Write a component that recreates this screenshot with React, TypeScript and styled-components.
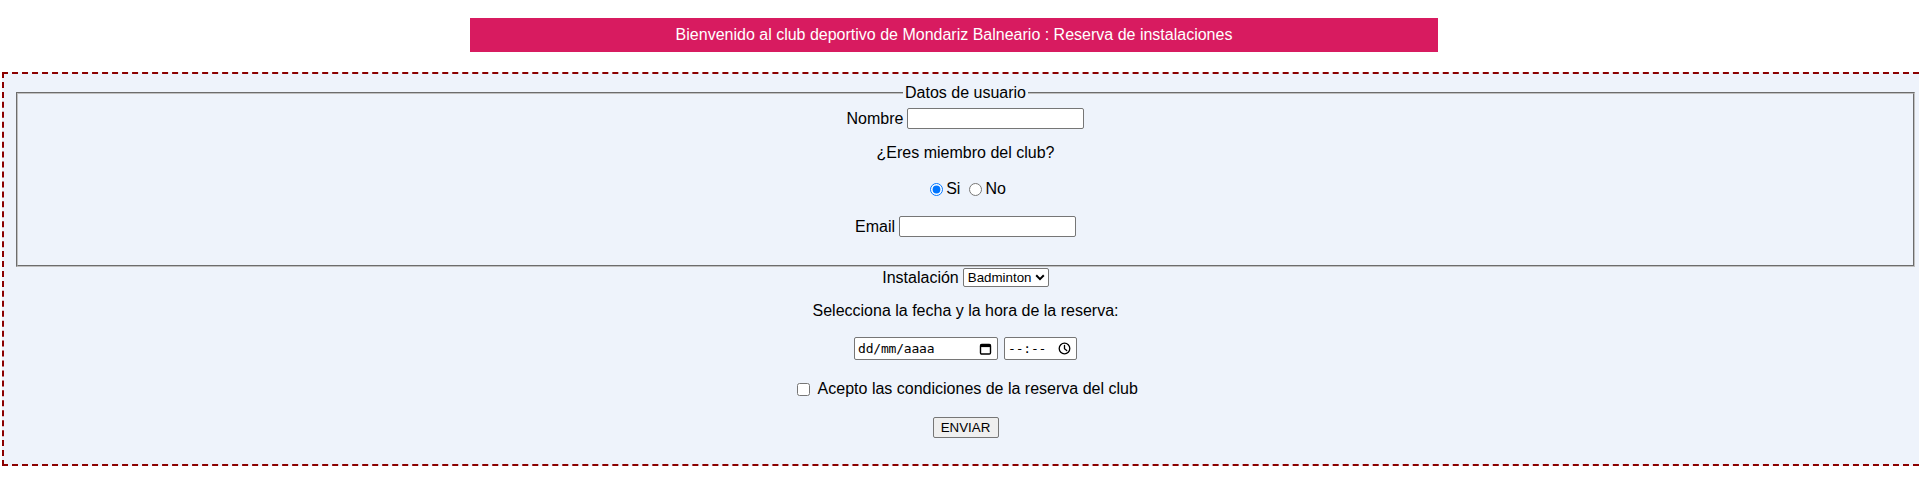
import styled, { createGlobalStyle } from 'styled-components';

const GlobalStyle = createGlobalStyle`
  html {
    overflow-x: hidden;
  }

  body {
    margin: 0;
    font-family: "Liberation Sans", Arial, sans-serif;
    font-size: 16px;
    color: #000;
    background: #fff;
  }
`;

const Banner = styled.div`
  width: 968px;
  margin: 18px 0 0 470px;
  padding: 8px 0;
  line-height: 18px;
  background: #d81b60;
  color: #fff;
  text-align: center;
`;

const BookingForm = styled.form`
  margin: 20px -10px 0 2px;
  padding: 10px 10px 26px;
  border: 2px dashed #8b0000;
  background: #eef3fb;
`;

const UserFieldset = styled.fieldset`
  margin: 0 2px;
  padding: 6px 12px 28px;
  border: 2px groove rgb(192, 192, 192);
  min-width: 0;
`;

const Legend = styled.legend`
  margin: 0 auto;
  padding: 0 2px;
  line-height: 18px;
`;

const Row = styled.div<{ $top?: number; $h: number; $gap?: number }>`
  display: flex;
  justify-content: center;
  align-items: center;
  gap: ${(p) => p.$gap ?? 4}px;
  margin-top: ${(p) => p.$top ?? 0}px;
  height: ${(p) => p.$h}px;
  line-height: 18px;
`;

const Label = styled.label`
  display: flex;
  align-items: center;
  white-space: nowrap;
`;

const TextInput = styled.input`
  box-sizing: border-box;
  width: 177px;
  height: 21px;
  margin: 0;
  padding: 1px 2px;
  border: 1px solid #767676;
  border-radius: 2px;
  background: #fff;
  font: 13.33px "Liberation Sans", Arial, sans-serif;
`;

const Radio = styled.input`
  width: 13px;
  height: 13px;
  margin: 0 3px 0 5px;
`;

const Check = styled.input`
  width: 13px;
  height: 13px;
  margin: 0 3px 0 4px;
`;

const SelectWrap = styled.span`
  position: relative;
  display: inline-flex;
`;

const Select = styled.select`
  box-sizing: border-box;
  width: 86px;
  height: 19px;
  margin: 0;
  padding: 0 14px 0 4px;
  appearance: none;
  border: 1px solid #767676;
  border-radius: 2px;
  background: #fff;
  color: #000;
  font: 13.33px "Liberation Sans", Arial, sans-serif;
`;

const Chevron = styled.svg`
  position: absolute;
  right: 4px;
  top: 6px;
  pointer-events: none;
`;

const PickerBox = styled.div<{ $w: number }>`
  box-sizing: border-box;
  display: flex;
  align-items: center;
  justify-content: space-between;
  width: ${(p) => p.$w}px;
  height: 23px;
  padding: 0 5px 0 3px;
  border: 1px solid #767676;
  border-radius: 2px;
  background: #fff;
  font: 13px "DejaVu Sans Mono", "Liberation Mono", monospace;
  letter-spacing: -0.2px;
`;

const SubmitButton = styled.button`
  box-sizing: border-box;
  width: 66px;
  height: 21px;
  padding: 0 6px;
  border: 1px solid #767676;
  border-radius: 2px;
  background: #efefef;
  color: #000;
  font: 13.33px "Liberation Sans", Arial, sans-serif;
`;

const CalendarIcon = () => (
  <svg width="13" height="13" viewBox="0 0 13 13">
    <rect x="1.5" y="2.5" width="10" height="9.5" rx="1.2" fill="none" stroke="#000" strokeWidth="1.4" />
    <rect x="1.5" y="2.5" width="10" height="2.6" fill="#000" />
  </svg>
);

const ClockIcon = () => (
  <svg width="13" height="13" viewBox="0 0 13 13">
    <circle cx="6.5" cy="6.5" r="5.3" fill="none" stroke="#000" strokeWidth="1.3" />
    <path d="M6.5 3.3V6.7L8.7 8.5" fill="none" stroke="#000" strokeWidth="1.3" strokeLinecap="round" />
  </svg>
);

export default function App() {
  return (
    <>
      <GlobalStyle />
      <Banner>Bienvenido al club deportivo de Mondariz Balneario : Reserva de instalaciones</Banner>
      <BookingForm onSubmit={(e) => e.preventDefault()}>
        <UserFieldset>
          <Legend>Datos de usuario</Legend>
          <Row $h={21}>
            <Label htmlFor="nombre">Nombre</Label>
            <TextInput id="nombre" type="text" />
          </Row>
          <Row $top={15} $h={18}>¿Eres miembro del club?</Row>
          <Row $top={18} $h={18} $gap={4}>
            <Label>
              <Radio type="radio" name="miembro" defaultChecked />
              Si
            </Label>
            <Label>
              <Radio type="radio" name="miembro" />
              No
            </Label>
          </Row>
          <Row $top={18} $h={21}>
            <Label htmlFor="email">Email</Label>
            <TextInput id="email" type="email" />
          </Row>
        </UserFieldset>

        <Row $h={21}>
          <Label htmlFor="instalacion">Instalación</Label>
          <SelectWrap>
            <Select id="instalacion" defaultValue="badminton">
              <option value="badminton">Badminton</option>
              <option value="tenis">Tenis</option>
              <option value="padel">Pádel</option>
            </Select>
            <Chevron width="10" height="7" viewBox="0 0 10 7">
              <path d="M1.2 1.3L5 5.1L8.8 1.3" fill="none" stroke="#000" strokeWidth="2" />
            </Chevron>
          </SelectWrap>
        </Row>
        <Row $top={14} $h={18}>Selecciona la fecha y la hora de la reserva:</Row>
        <Row $top={17} $h={23} $gap={6}>
          <PickerBox $w={144}>
            <span>dd/mm/aaaa</span>
            <CalendarIcon />
          </PickerBox>
          <PickerBox $w={73}>
            <span>--:--</span>
            <ClockIcon />
          </PickerBox>
        </Row>
        <Row $top={20} $h={18}>
          <Label>
            <Check type="checkbox" />
            &nbsp;Acepto las condiciones de la reserva del club
          </Label>
        </Row>
        <Row $top={19} $h={21}>
          <SubmitButton type="submit">ENVIAR</SubmitButton>
        </Row>
      </BookingForm>
    </>
  );
}
